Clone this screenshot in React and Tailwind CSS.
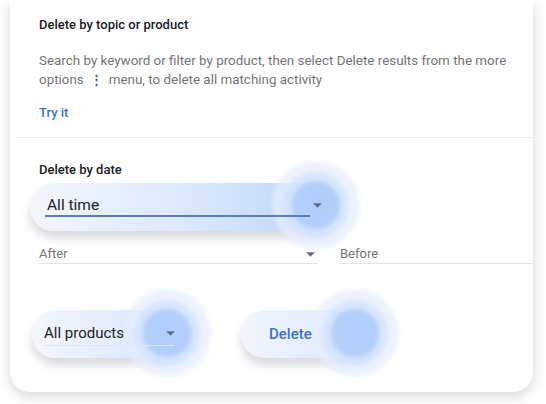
import React from "react";

function Glow({ className }) {
  return (
    <div className={`absolute pointer-events-none ${className}`}>
      <div className="relative w-[88px] h-[88px] blur-[2px]">
        <div className="absolute inset-0 rounded-full bg-[#e5eefd] opacity-70" />
        <div className="absolute left-[11px] top-[11px] w-[66px] h-[66px] rounded-full bg-[#cddffc] opacity-70" />
        <div className="absolute left-[20px] top-[20px] w-[48px] h-[48px] rounded-full bg-[#abcaf9] opacity-85" />
      </div>
    </div>
  );
}

function Tri({ className = "" }) {
  return (
    <svg width="9" height="5" viewBox="0 0 10 5" className={className}>
      <path d="M0 0 L10 0 L5 5 Z" fill="#5f6f88" />
    </svg>
  );
}

export default function App() {
  return (
    <div className="w-[546px] h-[404px] bg-white overflow-hidden font-['Roboto',sans-serif]">
      <div className="ml-[10px] w-[523px] h-[392px] bg-white rounded-b-[20px] shadow-[0_4px_14px_rgba(0,0,0,0.16)] pt-[17px]">
        <div className="pl-[29px] pr-[8px]">
          <div className="text-[13px] leading-[16px] font-medium text-[#202124]">Delete by topic or product</div>
          <p className="mt-[18px] text-[13.4px] leading-[19px] text-[#757575]">
            Search by keyword or filter by product, then select Delete results from the more
            <br />
            options
            <span className="inline-block mx-[6px] text-[#5f6368] font-bold">⋮</span>
            menu, to delete all matching activity
          </p>
          <div className="mt-[16px] text-[13px] leading-[16px] font-medium text-[#3a74d4]">Try it</div>
        </div>
        <div className="mt-[16px] ml-[6px] h-px bg-[#eceef1]" />
        <div className="mt-[24px] px-[29px] text-[13px] leading-[16px] font-medium text-[#202124]">Delete by date</div>

        <div className="relative mt-[5px] ml-[20px] w-[310px] h-[48px] rounded-full bg-gradient-to-r from-[#f3f6fd] via-[#dce9fc] to-[#b9d3fa] shadow-[0_7px_10px_rgba(60,70,90,0.2)] flex items-center pl-[15px]">
          <Glow className="left-[242px] top-[-22px]" />
          <div className="relative w-[265px] -mt-[3px]">
            <div className="pl-[2px] text-[15.5px] leading-[20px] text-[#202124]">All time</div>
            <div className="h-[2px] bg-[#5b7cb5]" />
          </div>
          <Tri className="relative ml-[3px] -mt-[3px]" />
        </div>

        <div className="mt-[15px] ml-[29px] flex">
          <div className="w-[279px] h-[18px] border-b border-[#e3e3e3] flex items-start justify-between text-[13px] leading-[16px] text-[#757575]">
            <span>After</span>
            <Tri className="mt-[6px] mr-[3px]" />
          </div>
          <div className="ml-[22px] flex-1 h-[18px] border-b border-[#e3e3e3] text-[13px] leading-[16px] text-[#757575]">Before</div>
        </div>

        <div className="mt-[46px] flex items-center">
          <div className="relative ml-[22px] w-[162px] h-[48px] rounded-full bg-gradient-to-r from-[#f3f6fd] via-[#e4edfc] to-[#c3d9fb] shadow-[0_7px_10px_rgba(60,70,90,0.2)] flex items-center pl-[12px]">
            <Glow className="left-[91px] top-[-21px]" />
            <div className="relative w-[130px] pt-[1px]">
              <div className="text-[15px] leading-[20px] text-[#202124]">All products</div>
              <div className="h-px bg-[#dde5f3] mt-[2px]" />
            </div>
            <Tri className="absolute left-[134px] top-[21px]" />
          </div>
          <div className="relative ml-[47px] w-[138px] h-[48px] rounded-full bg-gradient-to-r from-[#f1f5fd] via-[#e6eefc] to-[#c7dbfb] shadow-[0_7px_10px_rgba(60,70,90,0.2)] flex items-center pl-[28px]">
            <Glow className="left-[70px] top-[-21px]" />
            <div className="relative text-[15px] leading-[18px] font-medium text-[#3f70c8]">Delete</div>
          </div>
        </div>
      </div>
    </div>
  );
}
